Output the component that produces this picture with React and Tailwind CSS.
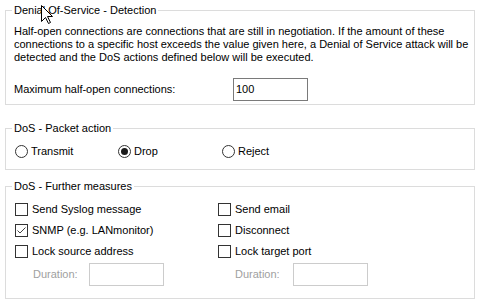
import React from "react";

function Radio({ checked, label, className }) {
  return (
    <div className={`flex items-center h-[13px] ${className}`}>
      <span className="w-[13px] h-[13px] rounded-full border border-[#333] flex items-center justify-center">
        {checked && <span className="w-[7px] h-[7px] rounded-full bg-[#1a1a1a]" />}
      </span>
      <span className="ml-[3px]">{label}</span>
    </div>
  );
}

function Check({ checked, label }) {
  return (
    <div className="flex items-center h-[13px]">
      <span className="w-[13px] h-[13px] border border-[#333] flex items-center justify-center">
        {checked && (
          <svg width="11" height="11" viewBox="0 0 11 11">
            <path d="M1.5 5.5 L4 8 L9.5 2.5" fill="none" stroke="#444" strokeWidth="1" />
          </svg>
        )}
      </span>
      <span className="ml-[4px]">{label}</span>
    </div>
  );
}

function Duration({ labelClass }) {
  return (
    <div className="flex items-center h-[23px]">
      <span className={`text-[#a0a0a0] ${labelClass}`}>Duration:</span>
      <div className="w-[75px] h-[23px] border border-[#cccccc]" />
    </div>
  );
}

export default function App() {
  return (
    <div
      className="w-[480px] h-[305px] bg-white text-black text-[11px] leading-[13px] relative overflow-hidden pt-[4px]"
      style={{ fontFamily: '"Liberation Sans", Arial, sans-serif' }}
    >
      <fieldset className="ml-[5px] w-[470px] border border-[#dcdcdc] pt-[8px] pb-[3px]">
        <legend className="ml-[6px] px-[2px]">Denial Of-Service - Detection</legend>
        <div className="pl-[8px]">
          <div className="whitespace-nowrap">
            Half-open connections are connections that are still in negotiation. If the amount of these
          </div>
          <div className="whitespace-nowrap">
            connections to a specific host exceeds the value given here, a Denial of Service attack will be
          </div>
          <div className="whitespace-nowrap">
            detected and the DoS actions defined below will be executed.
          </div>
          <div className="flex items-center mt-[14px]">
            <span className="w-[219px]">Maximum half-open connections:</span>
            <div className="w-[75px] h-[23px] border border-[#7a7a7a] pl-[2px] flex items-center">
              100
            </div>
          </div>
        </div>
      </fieldset>

      <fieldset className="ml-[5px] mt-[17px] w-[470px] border border-[#dcdcdc] pt-[10px] pb-[11px]">
        <legend className="ml-[6px] px-[2px]">DoS - Packet action</legend>
        <div className="flex pl-[9px]">
          <Radio label="Transmit" className="w-[103px]" />
          <Radio label="Drop" checked className="w-[104px]" />
          <Radio label="Reject" />
        </div>
      </fieldset>

      <fieldset className="ml-[5px] mt-[10px] w-[470px] border border-[#dcdcdc] pt-[10px] pb-[12px]">
        <legend className="ml-[6px] px-[2px]">DoS - Further measures</legend>
        <div className="grid grid-cols-[203px_1fr] gap-y-[8px] pl-[9px]">
          <Check label="Send Syslog message" />
          <Check label="Send email" />
          <Check label="SNMP (e.g. LANmonitor)" checked />
          <Check label="Disconnect" />
          <Check label="Lock source address" />
          <Check label="Lock target port" />
        </div>
        <div className="grid grid-cols-[203px_1fr] pl-[9px] mt-[5px]">
          <Duration labelClass="ml-[18px] w-[56px]" />
          <Duration labelClass="ml-[17px] w-[58px]" />
        </div>
      </fieldset>

      <svg className="absolute left-[41px] top-[5px]" width="13" height="20" viewBox="0 0 13 20">
        <path
          d="M0.5 0.5 L0.5 16.5 L4.5 12.5 L7.5 18.5 L9.5 17.5 L6.5 11.5 L11.5 11.5 Z"
          fill="#fff"
          stroke="#000"
          strokeWidth="1"
        />
      </svg>
    </div>
  );
}
